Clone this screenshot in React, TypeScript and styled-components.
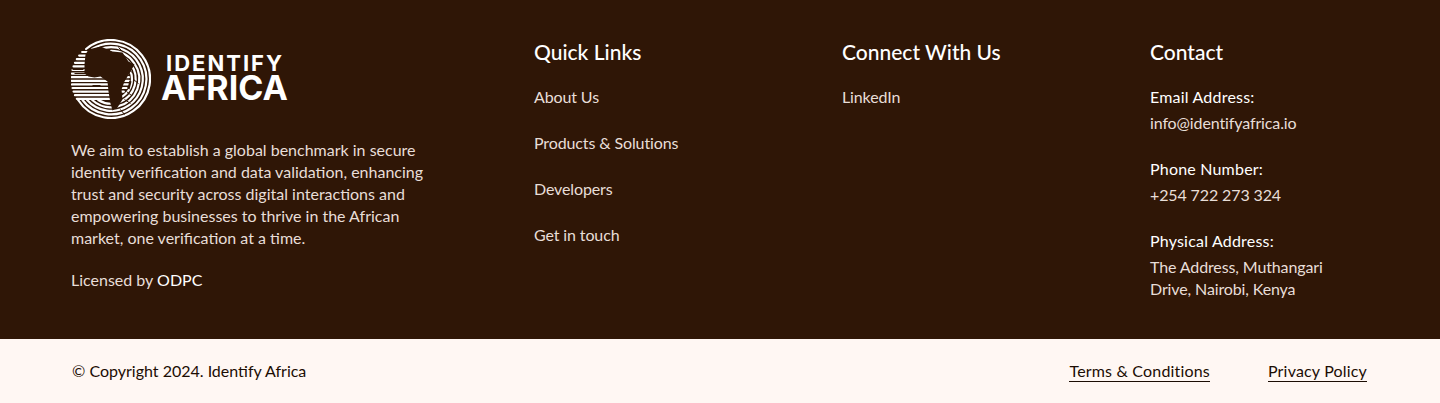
import React from 'react';
import styled, { createGlobalStyle } from 'styled-components';

const GlobalStyle = createGlobalStyle`
  * { box-sizing: border-box; }
  html, body { margin: 0; padding: 0; background: #fff7f3; }
  body { font-family: Lato, "Noto Sans", sans-serif; }
`;

const quickLinks = ['About Us', 'Products & Solutions', 'Developers', 'Get in touch'];

const CX = 110.5;
const CY = 79.5;
const ringRadii = [39, 35.4, 31.8, 28.2, 24.6, 21];
const stripeRows = Array.from({ length: 14 }, (_, i) => -27 + i * 3.6);

// little dark cuts that break up the rings and stripes
const cuts = [
  'M128 70 L133 74', 'M133 80 L138 84', 'M126 92 L131 96', 'M124 100 L130 104', 'M120 110 L124 115',
  'M72 70 L83 70', 'M74 74 L86 74', 'M92 86 L100 86', 'M118 48 L122 52',
];

const polar = (r: number, deg: number) => {
  const a = (deg * Math.PI) / 180;
  return `${(CX + r * Math.sin(a)).toFixed(2)} ${(CY - r * Math.cos(a)).toFixed(2)}`;
};

const ringPath = (r: number) => {
  const start = r > 30 ? -(Math.acos(30 / r) * 180) / Math.PI : 0;
  const end = r > 21 ? 360 - (Math.acos(-21 / r) * 180) / Math.PI : 180;
  return `M${polar(r, start)} A${r} ${r} 0 ${end - start > 180 ? 1 : 0} 1 ${polar(r, end)}`;
};

const stripeLine = (dy: number) => {
  const half = Math.sqrt(Math.max(0, 39.5 * 39.5 - dy * dy));
  const inner = Math.sqrt(Math.max(0, 18 * 18 - dy * dy));
  return { x1: CX - half, x2: CX + inner, y: CY + dy };
};

const GlobeLogo: React.FC = () => (
  <svg width="80" height="80" viewBox="70.5 39.5 80 80">
    <g stroke="#fff" strokeWidth="2.2" strokeLinecap="round" fill="none">
      {ringRadii.map((r) => (
        <path key={r} d={ringPath(r)} />
      ))}
      {stripeRows.map((dy) => {
        const { x1, x2, y } = stripeLine(dy);
        return <line key={dy} x1={x1} y1={y} x2={x2} y2={y} />;
      })}
    </g>
    <g fill="#2f1606">
      <path d="M88 50 L100 47 L112 52 L122 53 L128 62 L134 65 L130 72 L124 82 L121 90 L122 100 L117 108 L112 111 L110 104 L108 92 L107 82 L100 77 L94 78 L88 77 L84 74 L84 65 L85 55 Z" />
      <path d="M129 81 L131 82 L129 90 L127 89 Z" />
    </g>
    <g stroke="#2f1606" strokeWidth="1" fill="none">
      {cuts.map((d) => (
        <path key={d} d={d} />
      ))}
    </g>
  </svg>
);

const App: React.FC = () => (
  <>
    <GlobalStyle />
    <Main>
      <Brand>
        <LogoRow>
          <GlobeLogo />
          <LogoText>
            <LogoTop>IDENTIFY</LogoTop>
            <LogoBottom>AFRICA</LogoBottom>
          </LogoText>
        </LogoRow>
        <Blurb>
          We aim to establish a global benchmark in secure identity verification and data
          validation, enhancing trust and security across digital interactions and empowering
          businesses to thrive in the African market, one verification at a time.
        </Blurb>
        <Licensed>
          Licensed by <strong>ODPC</strong>
        </Licensed>
      </Brand>

      <Column>
        <Heading>Quick Links</Heading>
        <LinkList>
          {quickLinks.map((link) => (
            <li key={link}>{link}</li>
          ))}
        </LinkList>
      </Column>

      <Column>
        <Heading>Connect With Us</Heading>
        <LinkList>
          <li>LinkedIn</li>
        </LinkList>
      </Column>

      <Column>
        <Heading>Contact</Heading>
        <ContactList>
          <div>
            <ContactLabel>Email Address:</ContactLabel>
            <ContactValue>info@identifyafrica.io</ContactValue>
          </div>
          <div>
            <ContactLabel>Phone Number:</ContactLabel>
            <ContactValue>+254 722 273 324</ContactValue>
          </div>
          <div>
            <ContactLabel>Physical Address:</ContactLabel>
            <ContactValue>The Address, Muthangari Drive, Nairobi, Kenya</ContactValue>
          </div>
        </ContactList>
      </Column>
    </Main>
    <BottomBar>
      <span>© Copyright 2024. Identify Africa</span>
      <LegalLinks>
        <LegalLink>Terms &amp; Conditions</LegalLink>
        <LegalLink>Privacy Policy</LegalLink>
      </LegalLinks>
    </BottomBar>
  </>
);

const Main = styled.footer`
  display: grid;
  grid-template-columns: 463px 308px 308px 1fr;
  height: 339px;
  padding: 39px 72px 0 71px;
  background: #2f1606;
  color: #fff;
`;

const Brand = styled.div`
  display: flex;
  flex-direction: column;
`;

const LogoRow = styled.div`
  display: flex;
  align-items: center;
  gap: 10px;
  height: 80px;
`;

const LogoText = styled.div`
  display: flex;
  flex-direction: column;
  margin-bottom: 5px;
  color: #fff;
`;

const LogoTop = styled.span`
  font-family: Inter, sans-serif;
  font-size: 22px;
  line-height: 22px;
  font-weight: 700;
  letter-spacing: 2px;
  margin-left: 5px;
`;

const LogoBottom = styled.span`
  font-family: Inter, sans-serif;
  font-size: 34px;
  line-height: 28px;
  font-weight: 700;
`;

const Blurb = styled.p`
  width: 360px;
  margin: 20px 0 0;
  font-size: 16px;
  line-height: 22px;
  font-weight: 400;
  color: #e8ded8;
`;

const Licensed = styled.p`
  margin: 20px 0 0;
  font-size: 16px;
  line-height: 22px;
  font-weight: 400;
  color: #e8ded8;

  strong {
    font-weight: 400;
    color: #fff;
  }
`;

const Column = styled.div`
  display: flex;
  flex-direction: column;
`;

const Heading = styled.h3`
  margin: 0;
  font-size: 21px;
  line-height: 26px;
  font-weight: 500;
`;

const LinkList = styled.ul`
  display: flex;
  flex-direction: column;
  gap: 24px;
  margin: 21px 0 0;
  padding: 0;
  list-style: none;
  font-size: 16px;
  line-height: 22px;
  font-weight: 400;
  letter-spacing: -0.12px;
  color: #e8ded8;
`;

const ContactList = styled.div`
  display: flex;
  flex-direction: column;
  gap: 24px;
  margin-top: 21px;
  width: 190px;
`;

const ContactLabel = styled.div`
  margin-bottom: 4px;
  font-size: 16px;
  line-height: 22px;
  font-weight: 400;
  letter-spacing: 0.2px;
`;

const ContactValue = styled.div`
  font-size: 16px;
  line-height: 22px;
  font-weight: 400;
  letter-spacing: -0.12px;
  color: #e8ded8;
`;

const BottomBar = styled.div`
  display: flex;
  align-items: center;
  justify-content: space-between;
  height: 64px;
  padding: 0 73px 2px 72px;
  background: #fff7f3;
  color: #1c0d03;
  font-size: 16px;
  font-weight: 400;
`;

const LegalLinks = styled.div`
  display: flex;
  gap: 58px;
  margin-top: 2px;
  letter-spacing: 0.18px;
`;

const LegalLink = styled.a`
  border-bottom: 1px solid #1c0d03;
  line-height: 20px;
`;

export default App;
